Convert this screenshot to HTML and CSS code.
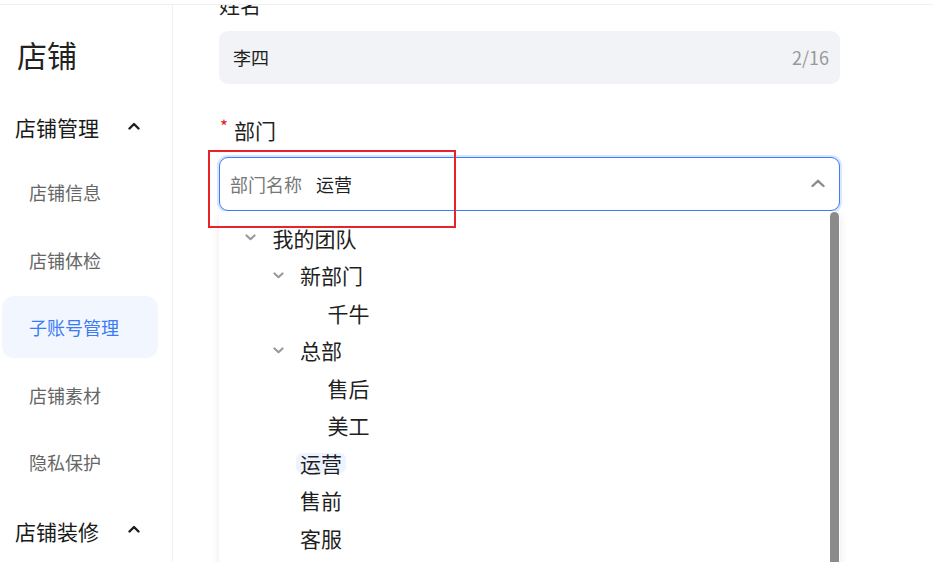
FILE: index.html
```html
<!DOCTYPE html>
<html lang="zh-CN">
<head>
<meta charset="utf-8">
<title>子账号管理</title>
<link rel="stylesheet" href="styles.css">
</head>
<body>
<div class="page">
  <div class="topline"></div>
  <div class="layout">
    <aside class="sidebar">
      <div class="side-title">店铺</div>
      <div class="group-head">
        <span class="group-text">店铺管理</span>
        <svg class="caret" width="12" height="8" viewBox="0 0 12 8"><polyline points="1.5,6.5 6,2 10.5,6.5" fill="none" stroke="#1f1f1f" stroke-width="2.4" stroke-linecap="round" stroke-linejoin="round"/></svg>
      </div>
      <ul class="side-list">
        <li class="side-item">店铺信息</li>
        <li class="side-item">店铺体检</li>
        <li class="side-item active">子账号管理</li>
        <li class="side-item">店铺素材</li>
        <li class="side-item">隐私保护</li>
      </ul>
      <div class="group-head group-last">
        <span class="group-text">店铺装修</span>
        <svg class="caret" width="12" height="8" viewBox="0 0 12 8"><polyline points="1.5,6.5 6,2 10.5,6.5" fill="none" stroke="#1f1f1f" stroke-width="2.4" stroke-linecap="round" stroke-linejoin="round"/></svg>
      </div>
    </aside>
    <main class="main">
      <div class="form">
        <div class="label label-first">姓名</div>
        <div class="input">
          <span class="input-value">李四</span>
          <span class="input-count">2/16</span>
        </div>
        <div class="label label-req"><span class="req">*</span>部门</div>
        <div class="select-wrap">
          <div class="select">
            <span class="select-prefix">部门名称</span>
            <span class="select-value">运营</span>
            <svg class="select-arrow" width="14" height="8" viewBox="0 0 14 8"><polyline points="1.5,7 7,1.8 12.5,7" fill="none" stroke="#8c8c8c" stroke-width="2.4" stroke-linecap="round" stroke-linejoin="round"/></svg>
          </div>
          <div class="dropdown">
            <div class="tree">
              <div class="row lv0"><span class="switch"><svg width="11" height="7" viewBox="0 0 11 7"><polyline points="1.5,1.5 5.5,5.2 9.5,1.5" fill="none" stroke="#9a9a9a" stroke-width="2.2" stroke-linecap="round" stroke-linejoin="round"/></svg></span><span class="title">我的团队</span></div>
              <div class="row lv1"><span class="switch"><svg width="11" height="7" viewBox="0 0 11 7"><polyline points="1.5,1.5 5.5,5.2 9.5,1.5" fill="none" stroke="#9a9a9a" stroke-width="2.2" stroke-linecap="round" stroke-linejoin="round"/></svg></span><span class="title">新部门</span></div>
              <div class="row lv2"><span class="switch"></span><span class="title">千牛</span></div>
              <div class="row lv1"><span class="switch"><svg width="11" height="7" viewBox="0 0 11 7"><polyline points="1.5,1.5 5.5,5.2 9.5,1.5" fill="none" stroke="#9a9a9a" stroke-width="2.2" stroke-linecap="round" stroke-linejoin="round"/></svg></span><span class="title">总部</span></div>
              <div class="row lv2"><span class="switch"></span><span class="title">售后</span></div>
              <div class="row lv2"><span class="switch"></span><span class="title">美工</span></div>
              <div class="row lv1"><span class="switch"></span><span class="title selected">运营</span></div>
              <div class="row lv1"><span class="switch"></span><span class="title">售前</span></div>
              <div class="row lv1"><span class="switch"></span><span class="title">客服</span></div>
            </div>
            <div class="scroll-thumb"></div>
          </div>
        </div>
      </div>
    </main>
  </div>
  <div class="annot"></div>
</div>
</body>
</html>
```
FILE: styles.css
```css
* { box-sizing: border-box; }
html, body { margin: 0; padding: 0; background: #fff; }
body {
  font-family: "Noto Sans CJK SC", "Noto Sans", sans-serif;
  color: #1f1f1f;
}
.page {
  position: relative;
  width: 933px;
  height: 562px;
  overflow: hidden;
}
.topline {
  height: 5px;
  border-bottom: 1px solid #eef0f4;
}
.layout {
  display: flex;
  height: 557px;
}
/* sidebar */
.sidebar {
  width: 173px;
  flex: none;
  border-right: 1px solid #eef0f4;
}
.side-title {
  font-size: 30px;
  line-height: 40px;
  margin-top: 29px;
  padding-left: 17px;
  color: #222;
}
.group-head {
  display: flex;
  align-items: center;
  height: 40px;
  margin-top: 33px;
  padding-left: 15px;
  font-size: 21px;
  color: #1a1a1a;
}
.group-text { width: 84px; }
.caret { margin-left: 29px; margin-top: -3px; }
.group-last { margin-top: 17.5px; }
.side-list {
  list-style: none;
  margin: 14px 0 0;
  padding: 0;
}
.side-item {
  height: 62px;
  margin: 0 14px 5.5px 2px;
  padding-left: 27px;
  display: flex;
  align-items: center;
  font-size: 18px;
  color: #666;
  border-radius: 12px;
}
.side-item.active {
  background: #f2f6ff;
  color: #3b7bf6;
}
/* main */
.main {
  flex: 1;
  overflow: hidden;
  padding-left: 46px;
}
.form { width: 621px; }
.label {
  font-size: 21px;
  line-height: 28px;
  color: #1f1f1f;
}
.label-first { margin-top: -15.5px; }
.label-req {
  margin-top: 32px;
  display: flex;
  align-items: flex-start;
}
.req {
  width: 15px;
  color: #e0201c;
  font-size: 17px;
  line-height: 20px;
  padding-left: 1px;
}
.input {
  margin-top: 13.5px;
  height: 53px;
  background: #f2f3f6;
  border-radius: 9px;
  display: flex;
  align-items: center;
  justify-content: space-between;
  padding: 0 11px 0 14px;
}
.input-value { font-size: 18px; color: #1f1f1f; margin-top: -2px; }
.input-count { font-size: 18px; color: #999; margin-top: -2px; }
.select-wrap {
  position: relative;
  margin-top: 13px;
}
.select {
  height: 54px;
  border: 1px solid #3d7ef8;
  border-radius: 9px;
  box-shadow: 0 0 0 2px #d9e6fe;
  display: flex;
  align-items: center;
  padding: 0 14px 0 10px;
  font-size: 18px;
  background: #fff;
}
.select-prefix { color: #777; margin-top: -1px; }
.select-value { margin-left: 14px; color: #1f1f1f; flex: 1; margin-top: -1px; }
.select-arrow { margin-top: -2px; }
.dropdown {
  position: absolute;
  left: 0;
  top: 100%;
  width: 621px;
  height: 420px;
  background: #fff;
  box-shadow: 0 3px 8px rgba(0, 0, 0, 0.09);
  border-radius: 6px;
  padding: 8px 0 0 19.5px;
}
.scroll-thumb {
  position: absolute;
  right: 1px;
  top: 1px;
  width: 9px;
  height: 480px;
  background: #8b8b8b;
  border-radius: 5px;
}
.row {
  height: 37.5px;
  display: flex;
  align-items: center;
  font-size: 21px;
  color: #1f1f1f;
}
.lv1 { padding-left: 27.5px; }
.lv2 { padding-left: 55px; }
.switch {
  width: 24px;
  margin-right: 6px;
  display: flex;
  justify-content: center;
  align-items: center;
}
.title {
  padding: 0 4px;
  line-height: 20px;
  border-radius: 6px;
}
.title.selected { background: #eef4ff; }
/* annotation overlay */
.annot {
  position: absolute;
  left: 208px;
  top: 150px;
  width: 248px;
  height: 78px;
  border: 2px solid #e6242a;
}
```
